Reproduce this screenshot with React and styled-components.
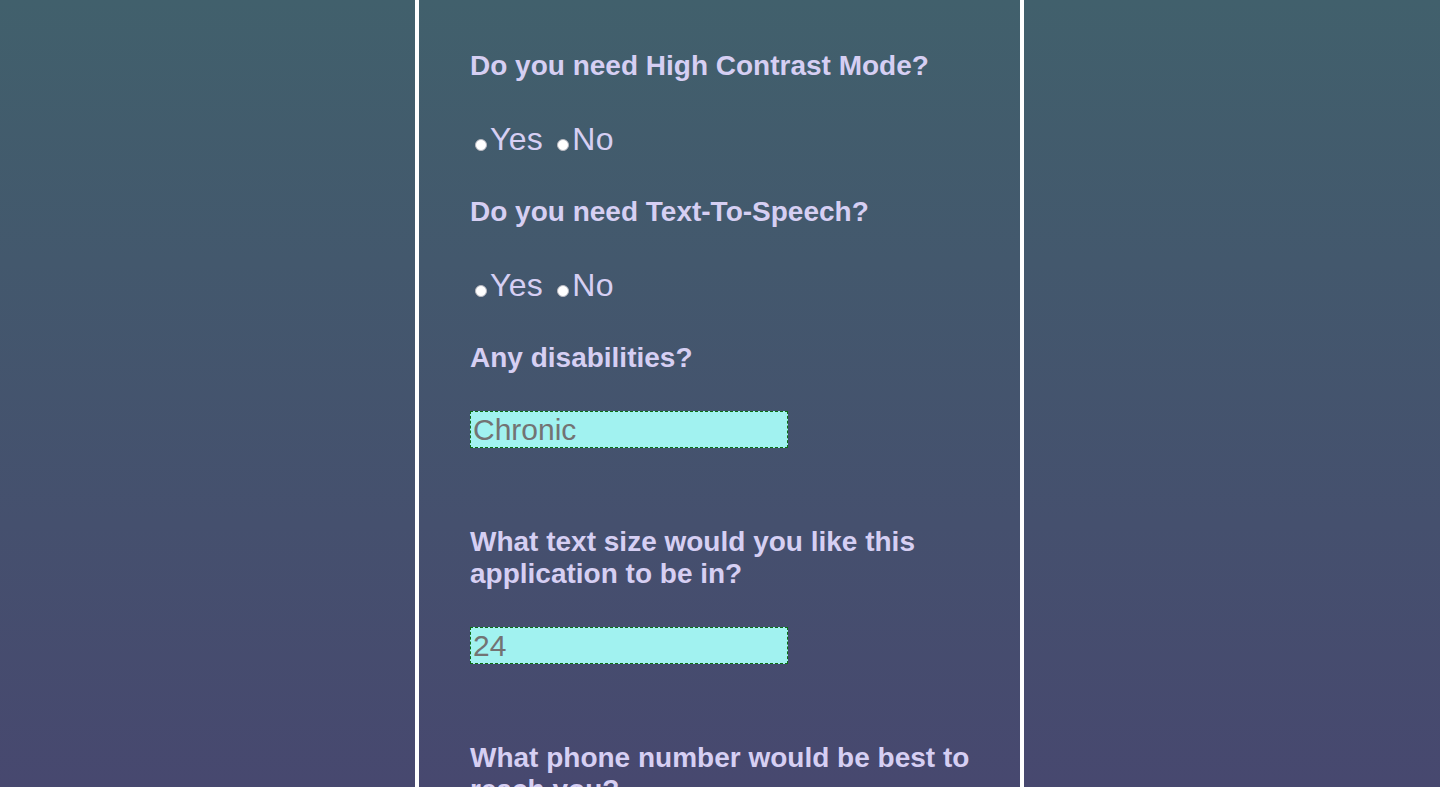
import styled, { createGlobalStyle } from "styled-components";

const GlobalStyle = createGlobalStyle`
  html, body {
    margin: 0;
    height: 100%;
  }
  body {
    background: linear-gradient(180deg, #41606c 0%, #47486f 100%);
    font-family: "Liberation Sans", Arial, sans-serif;
    overflow: hidden;
  }
  #root {
    height: 100%;
  }
`;

const questions = [
  { id: "contrast", label: "Do you need High Contrast Mode?", type: "radio" },
  { id: "tts", label: "Do you need Text-To-Speech?", type: "radio" },
  { id: "disabilities", label: "Any disabilities?", type: "text", value: "Chronic" },
  {
    id: "textsize",
    label: "What text size would you like this application to be in?",
    type: "text",
    value: "24"
  },
  { id: "phone", label: "What phone number would be best to reach you?", type: "text", value: "" }
];

const renderControl = q => {
  if (q.type === "radio") {
    return (
      <RadioRow>
        <Radio type="radio" name={q.id} value="yes" />
        Yes <Radio type="radio" name={q.id} value="no" />
        No
      </RadioRow>
    );
  }
  return <TextInput type="text" defaultValue={q.value} />;
};

export default () => (
  <>
    <GlobalStyle />
    <Page>
      <Panel>
        {questions.map(q => (
          <Question key={`question_${q.id}`}>
            <Heading>{q.label}</Heading>
            {renderControl(q)}
          </Question>
        ))}
      </Panel>
    </Page>
  </>
);

const Page = styled.div`
  display: flex;
  justify-content: center;
  height: 100%;
`;

const Panel = styled.main`
  width: 609px;
  box-sizing: border-box;
  border-left: 4px solid #ffffff;
  border-right: 4px solid #ffffff;
  padding: 50px 30px 0 51px;
  margin-left: -1px;
  height: 100%;
  overflow: hidden;
`;

const Question = styled.section`
  display: flex;
  flex-direction: column;
  align-items: flex-start;
`;

const Heading = styled.h3`
  margin: 0;
  font-size: 28px;
  line-height: 32px;
  font-weight: bold;
  color: #d6cff3;
`;

const RadioRow = styled.div`
  margin: 39px 0 38px;
  font-size: 32px;
  line-height: 37px;
  letter-spacing: 0.3px;
  color: #d6cff3;
`;

const Radio = styled.input`
  appearance: none;
  width: 12px;
  height: 12px;
  margin: 3px 3px 0 5px;
  border-radius: 50%;
  background: #ffffff;
  border: 1px solid #b8b8c0;
  box-sizing: border-box;
  vertical-align: baseline;
  position: relative;
  top: 1px;
`;

const TextInput = styled.input`
  margin: 37px 0 78px;
  width: 318px;
  height: 37px;
  box-sizing: border-box;
  padding: 0 2px;
  border: 1px dashed #0c6e14;
  background: #a1f2f0;
  font-family: "Liberation Sans", Arial, sans-serif;
  font-size: 30px;
  color: #737373;
  outline: none;
`;
